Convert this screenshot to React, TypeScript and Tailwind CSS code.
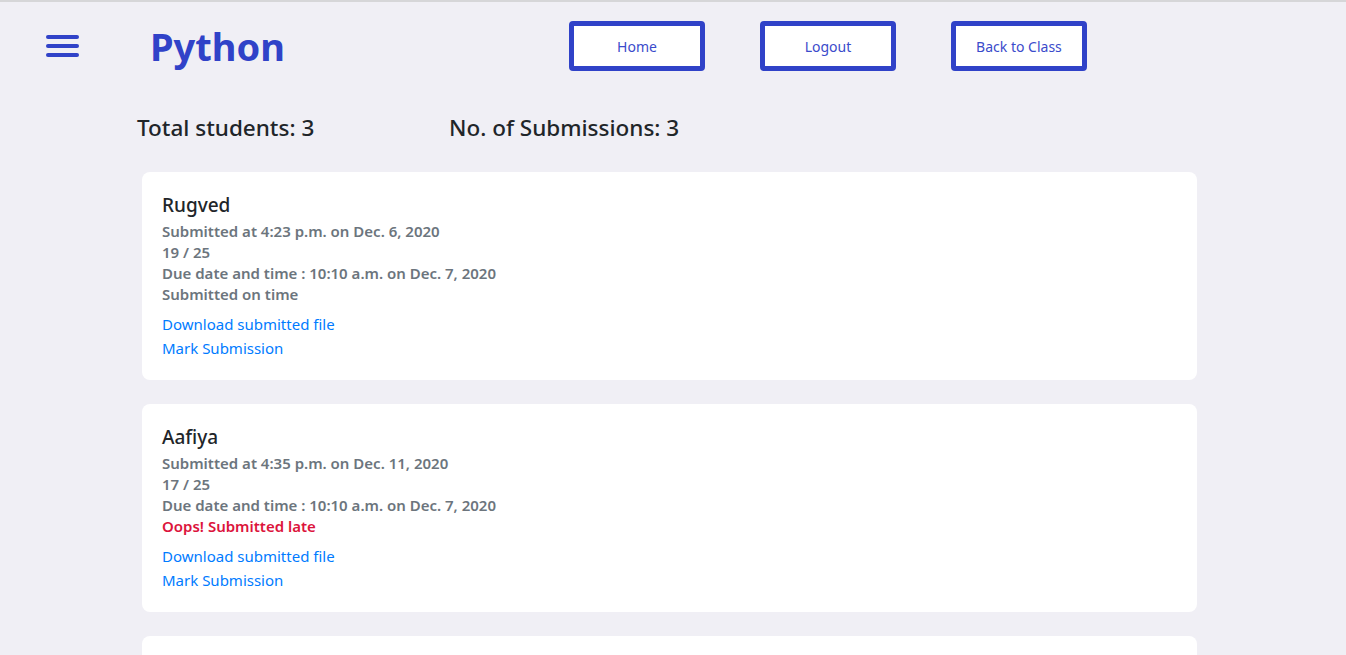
const submissions = [
  {
    name: "Rugved",
    submitted: "Submitted at 4:23 p.m. on Dec. 6, 2020",
    marks: "19 / 25",
    due: "Due date and time : 10:10 a.m. on Dec. 7, 2020",
    late: false,
  },
  {
    name: "Aafiya",
    submitted: "Submitted at 4:35 p.m. on Dec. 11, 2020",
    marks: "17 / 25",
    due: "Due date and time : 10:10 a.m. on Dec. 7, 2020",
    late: true,
  },
  {
    name: "Student",
    submitted: "Submitted at 5:02 p.m. on Dec. 6, 2020",
    marks: "20 / 25",
    due: "Due date and time : 10:10 a.m. on Dec. 7, 2020",
    late: false,
  },
];

function NavButton({ label }: { label: string }) {
  return (
    <button className="w-[136px] h-[50px] bg-white border-[5px] border-[#3042c8] rounded-[4px] text-[14px] text-[#3a4bcb]">
      {label}
    </button>
  );
}

function SubmissionCard({ s }: { s: (typeof submissions)[number] }) {
  return (
    <div className="bg-white rounded-lg p-5 flex flex-col">
      <h5 className="text-[19px] font-medium leading-[26px] mb-[3px] text-[#212529]">{s.name}</h5>
      <div className="text-[15px] leading-[21px] font-semibold text-[#6c757d]">
        <p>{s.submitted}</p>
        <p>{s.marks}</p>
        <p>{s.due}</p>
        {s.late ? (
          <p className="text-[#dc143c]">Oops! Submitted late</p>
        ) : (
          <p>Submitted on time</p>
        )}
      </div>
      <div className="mt-[7px] flex flex-col items-start text-[15px] leading-[24px] text-[#007bff]">
        <a href="#">Download submitted file</a>
        <a href="#">Mark Submission</a>
      </div>
    </div>
  );
}

export default function App() {
  return (
    <div className="min-h-[655px] bg-[#f0eff5] border-t-2 border-[#d6d6d8] font-['Noto_Sans',sans-serif]">
      <header className="flex items-center h-[88px]">
        <div className="ml-[46px] w-[33px] flex flex-col gap-[5px]">
          <span className="h-[4px] rounded-full bg-[#3042c8]" />
          <span className="h-[4px] rounded-full bg-[#3042c8]" />
          <span className="h-[4px] rounded-full bg-[#3042c8]" />
        </div>
        <h1 className="ml-[71px] text-[38px] font-bold text-[#3042c8] leading-none">Python</h1>
        <nav className="ml-[284px] flex gap-[55px]">
          <NavButton label="Home" />
          <NavButton label="Logout" />
          <NavButton label="Back to Class" />
        </nav>
      </header>
      <div className="flex pl-[137px] mt-[24px] text-[22.5px] font-medium text-[#212529] leading-[28px]">
        <p className="w-[312px]">Total students: 3</p>
        <p>No. of Submissions: 3</p>
      </div>
      <main className="ml-[142px] w-[1055px] mt-[30px] flex flex-col gap-6 pb-6">
        {submissions.map((s) => (
          <SubmissionCard key={s.name} s={s} />
        ))}
      </main>
    </div>
  );
}
